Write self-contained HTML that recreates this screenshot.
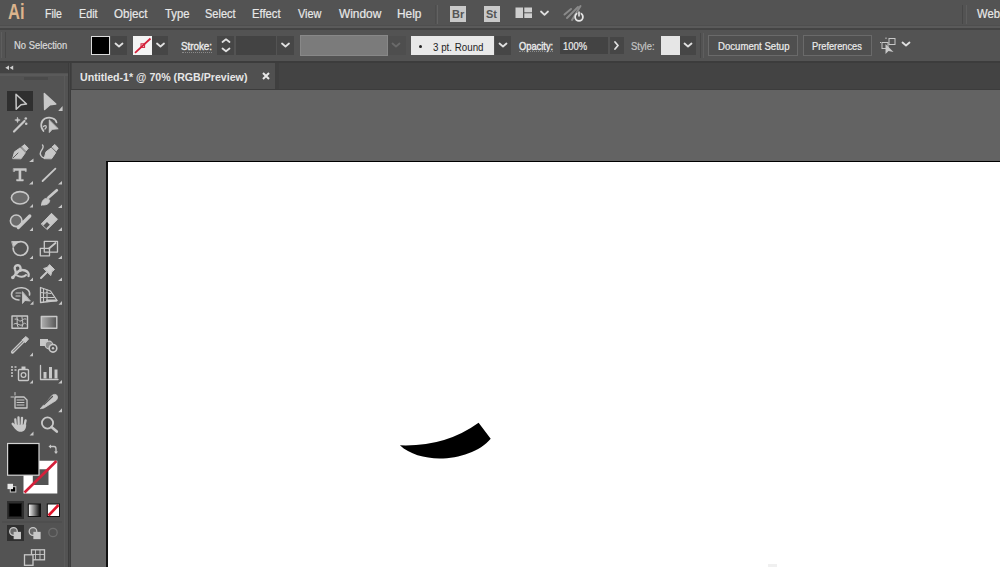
<!DOCTYPE html>
<html><head><meta charset="utf-8">
<style>
*{margin:0;padding:0;box-sizing:border-box}
html,body{width:1000px;height:567px;overflow:hidden;background:#535353;font-family:"Liberation Sans",sans-serif;color:#e6e6e6}
.a{position:absolute}
.t{position:absolute;white-space:nowrap;transform-origin:0 0;line-height:1}
.m{font-size:12.5px;top:8px;color:#e8e8e8;-webkit-text-stroke:0.2px #e8e8e8}
.c{font-size:10px;color:#ececec;-webkit-text-stroke:0.2px #ececec}
.box{position:absolute;background:#464646}
</style></head><body>
<!-- menu bar -->
<div class="a" style="left:0;top:24.5px;width:1000px;height:1.5px;background:#4e4e4e"></div>
<div class="a" style="left:0;top:26px;width:1000px;height:2px;background:#5a5a5a"></div>
<div class="a" style="left:0;top:28px;width:1000px;height:2px;background:#444444"></div>
<div class="t" style="left:7.5px;top:1.5px;font-size:21.5px;font-weight:bold;color:#dcb48c;transform:scaleX(0.77)">Ai</div>
<div class="t m" style="left:45px;transform:scaleX(0.84)">File</div>
<div class="t m" style="left:79px;transform:scaleX(0.86)">Edit</div>
<div class="t m" style="left:113.5px;transform:scaleX(0.93)">Object</div>
<div class="t m" style="left:164.5px;transform:scaleX(0.9)">Type</div>
<div class="t m" style="left:204.5px;transform:scaleX(0.88)">Select</div>
<div class="t m" style="left:252px;transform:scaleX(0.9)">Effect</div>
<div class="t m" style="left:297.5px;transform:scaleX(0.87)">View</div>
<div class="t m" style="left:338.5px;transform:scaleX(0.95)">Window</div>
<div class="t m" style="left:397px;transform:scaleX(0.95)">Help</div>
<div class="a" style="left:435px;top:5px;width:1px;height:19px;background:#4d4d4d"></div>
<div class="a" style="left:436.5px;top:5px;width:1.5px;height:19px;background:#626262"></div>
<div class="a" style="left:962px;top:5px;width:1px;height:19px;background:#474747"></div>
<div class="a" style="left:966px;top:5px;width:1px;height:19px;background:#5e5e5e"></div>
<div class="t m" style="left:977px;transform:scaleX(0.9)">Web</div>
<!-- Br / St -->
<div class="a" style="left:450px;top:6px;width:16px;height:16px;background:#c9c9c9"></div>
<div class="t" style="left:452px;top:9px;font-size:11px;color:#555;font-weight:bold">Br</div>
<div class="a" style="left:484px;top:6px;width:16px;height:16px;background:#c9c9c9"></div>
<div class="t" style="left:486px;top:9px;font-size:11px;color:#555;font-weight:bold">St</div>

<!-- control bar -->
<div class="a" style="left:0;top:61px;width:1000px;height:2px;background:#3c3c3c"></div>
<div class="a" style="left:1px;top:32px;width:1px;height:26px;background:#5e5e5e"></div>
<div class="a" style="left:5px;top:32px;width:1px;height:26px;background:#474747"></div>
<div class="t c" style="left:14px;top:41px;transform:scaleX(0.94);color:#dadada;-webkit-text-stroke:0.2px #dadada">No Selection</div>
<div class="a" style="left:91px;top:36px;width:19px;height:19px;background:#000;border:1.5px solid #dcdcdc"></div>
<div class="box" style="left:111px;top:36px;width:16px;height:19px"></div>
<div class="a" style="left:133px;top:36px;width:19px;height:19px;background:#f4f4f4"></div>
<div class="box" style="left:152px;top:36px;width:16px;height:19px"></div>
<div class="t c" style="left:181px;top:42px;transform:scaleX(0.98);-webkit-text-stroke:0.35px #ececec">Stroke:</div>
<div class="a" style="left:182px;top:51.5px;width:30px;height:1px;border-top:1px dotted #8a8a8a"></div>
<div class="box" style="left:217px;top:36px;width:17px;height:19px"></div>
<div class="a" style="left:236px;top:36px;width:40px;height:19px;background:#434343"></div>
<div class="box" style="left:277px;top:36px;width:17px;height:19px"></div>
<div class="a" style="left:300px;top:35px;width:88px;height:21px;background:#7b7b7b;border:1px solid #888"></div>
<div class="a" style="left:388px;top:36px;width:18px;height:19px;background:#4e4e4e"></div>
<div class="a" style="left:411px;top:36px;width:83px;height:19px;background:#e9e9e9"></div>
<div class="a" style="left:419px;top:44.5px;width:3px;height:3px;background:#222;border-radius:50%"></div>
<div class="t" style="left:433px;top:42px;font-size:10.5px;color:#1e1e1e;transform:scaleX(0.93)">3 pt. Round</div>
<div class="box" style="left:495px;top:36px;width:16px;height:19px"></div>
<div class="t c" style="left:518.5px;top:42px;transform:scaleX(0.93);-webkit-text-stroke:0.35px #ececec">Opacity:</div>
<div class="a" style="left:519px;top:50.5px;width:34px;height:1px;border-top:1px dotted #8a8a8a"></div>
<div class="a" style="left:560px;top:37px;width:48px;height:17px;background:#434343"></div>
<div class="t c" style="left:562.5px;top:42px;transform:scaleX(0.94)">100%</div>
<div class="box" style="left:610px;top:37px;width:14px;height:17px"></div>
<div class="t c" style="left:631px;top:42px;transform:scaleX(0.94);color:#c4c4c4;-webkit-text-stroke:0.2px #c4c4c4">Style:</div>
<div class="a" style="left:661px;top:36px;width:19px;height:19px;background:#e6e6e6"></div>
<div class="box" style="left:680px;top:36px;width:16px;height:19px"></div>
<div class="a" style="left:700px;top:33px;width:1px;height:25px;background:#474747"></div>
<div class="a" style="left:703px;top:33px;width:1px;height:25px;background:#5e5e5e"></div>
<div class="a" style="left:708px;top:35px;width:90px;height:21px;border:1px solid #6a6a6a;background:#4f4f4f"></div>
<div class="t c" style="left:717.5px;top:42px;transform:scaleX(0.96)">Document Setup</div>
<div class="a" style="left:803px;top:35px;width:69px;height:21px;border:1px solid #6a6a6a;background:#4f4f4f"></div>
<div class="t c" style="left:812px;top:42px;transform:scaleX(0.925)">Preferences</div>

<!-- tab bar -->
<div class="a" style="left:71px;top:63px;width:929px;height:26px;background:#434343"></div>
<div class="a" style="left:72px;top:63px;width:203px;height:26px;background:#505050"></div>
<div class="a" style="left:275px;top:63px;width:4px;height:26px;background:#3f3f3f"></div>
<div class="t" style="left:80px;top:72px;font-size:10.5px;font-weight:bold;color:#e6e6e6;transform:scaleX(1.012)">Untitled-1* @ 70% (RGB/Preview)</div>

<svg class="a" style="left:262px;top:72px" width="8" height="8"><path d="M1 1L7 7M7 1L1 7" stroke="#e8e8e8" stroke-width="2"/></svg>

<!-- toolbar -->
<div class="a" style="left:0;top:63px;width:68px;height:10px;background:#434343"></div>
<div class="a" style="left:0;top:74px;width:68px;height:2px;background:#5a5a5a"></div>
<div class="a" style="left:24px;top:77px;width:24px;height:3px;background:#4a4a4a"></div>
<div class="a" style="left:64px;top:76px;width:1px;height:491px;background:#5a5a5a"></div>
<div class="a" style="left:68px;top:63px;width:3px;height:504px;background:#3c3c3c"></div>
<div class="a" style="left:69px;top:63px;width:1px;height:504px;background:#464646"></div>
<div class="a" style="left:7px;top:91px;width:26px;height:20px;background:#2f2f2f"></div>
<div class="a" style="left:7px;top:501px;width:17px;height:18px;background:#2f2f2f"></div>
<div class="a" style="left:7px;top:525px;width:17px;height:16px;background:#2f2f2f"></div>

<!-- pasteboard -->
<div class="a" style="left:71px;top:89px;width:929px;height:1px;background:#3c3c3c"></div>
<div class="a" style="left:71px;top:90px;width:929px;height:477px;background:#636363"></div>
<div class="a" style="left:106px;top:161px;width:894px;height:406px;background:#fff;border-top:1px solid #000;border-left:2px solid #111"></div>

<svg class="a" style="left:0;top:0" width="1000" height="567" viewBox="0 0 1000 567" fill="none" stroke="none">

 <g fill="#c6c6c6">
  <path d="M58.2 111L62.6 111L62.6 106ZM29 162L33.5 162L33.5 158.5ZM29 184.5L33 184.5L33 181ZM58 184.5L62 184.5L62 181ZM29.5 207.5L33 207.5L33 204ZM58 208L62 208L62 204.5ZM29.5 231L33 231L33 227.3ZM58 231L62 231L62 227.3ZM29.5 259L33 259L33 255.5ZM58 259L62 259L62 255.5ZM29.5 281L33 281L33 277.5ZM58 281L62 281L62 277.5ZM30 304.7L33.5 304.7L33.5 301ZM58.5 304.7L62 304.7L62 301ZM29.6 356.2L33 356.2L33 352.4ZM29.6 383.4L33 383.4L33 380ZM58.2 383.4L62 383.4L62 380ZM58.2 412.2L62 412.2L62 408.3ZM29.6 435.4L33.5 435.4L33.5 431.6Z"/>
 </g>
 <g id="tools" stroke="#c8c8c8" fill="none" stroke-width="1.4" stroke-linejoin="round" stroke-linecap="round">
  <!-- selection -->
  <path d="M16 94.3L26.5 104L21 104.8L16.2 109.2Z" fill="#2f2f2f" stroke-width="1.5"/>
  <!-- direct selection -->
  <path d="M44.3 93.5L55.8 104L50 104.8L44.6 109.5Z" fill="#c8c8c8"/>
  <!-- magic wand -->
  <path d="M14 131.5L24.5 121" stroke-width="2.2"/>
  <path d="M17.5 117.5L18.3 119.4L20.2 120L18.3 120.7L17.5 122.6L16.8 120.7L14.8 120L16.8 119.4Z" fill="#c8c8c8" stroke-width="0.6"/>
  <circle cx="25.8" cy="118.5" r="1.3" fill="#c8c8c8" stroke="none"/>
  <circle cx="26.2" cy="123.8" r="1.3" fill="#c8c8c8" stroke="none"/>
  <!-- lasso -->
  <path d="M43.5 131C40 127 40.5 121 45 118.5C50 116.5 56 118.5 56.5 122.5" stroke-width="1.7"/>
  <path d="M43.5 126.5C46 124 47.5 127 45 129" stroke-width="1.3"/>
  <path d="M49.3 120.3L49.3 132.5L52.2 129.3L57.8 128.8Z" fill="#c8c8c8" stroke-width="1"/>
  <!-- pen -->
  <path d="M12.7 158.3L14.5 151.8L20.3 147.8L25.3 152.8L21.2 158.5Z" fill="#c8c8c8" stroke-width="1"/>
  <path d="M21.8 146.8L24.6 144.5L28.3 148.2L26 151Z" fill="#c8c8c8" stroke-width="1"/>
  <path d="M13 158L18 153" stroke="#535353" stroke-width="0.9"/>
  <!-- curvature pen -->
  <path d="M42.5 145C44.5 147 42 149.5 40.8 151.5C39.5 154 41 157.5 44.5 158" stroke-width="1.4"/>
  <path d="M44.2 158.3L46 151.8L51.2 148L55.7 152.8L51.7 158.5Z" fill="#c8c8c8" stroke-width="1"/>
  <path d="M52.2 146.8L54.9 144.5L58.2 148.2L56.2 151Z" fill="#c8c8c8" stroke-width="1"/>
  <!-- type -->
  <path d="M13.6 168.6H26.3V171.5H25.2V170.4H21V179.4H23.3V181H16.6V179.4H18.9V170.4H14.7V171.5H13.6Z" fill="#c8c8c8" stroke-width="0.5"/>
  <!-- line -->
  <path d="M42.6 181L55.4 168.6" stroke-width="1.8"/>
  <!-- ellipse -->
  <ellipse cx="20" cy="197.8" rx="8.6" ry="6.2" fill="#6b6b6b" stroke-width="1.6"/>
  <!-- paintbrush -->
  <path d="M48.5 197.5L56.8 190.3" stroke-width="2.8"/>
  <path d="M41.5 205C41.5 201 44 198 47.5 198.2L49.8 200.3C49.5 204 46 205.5 41.5 205Z" fill="#c8c8c8" stroke-width="0.8"/>
  <!-- shaper -->
  <circle cx="16.2" cy="220.8" r="5.8" fill="#6b6b6b" stroke-width="1.6"/>
  <path d="M18.3 227.5L29.8 216" stroke-width="3.2"/>
  <!-- eraser -->
  <path d="M41.5 223.8L51.5 213.3L57.5 219.3L47.5 229.3Z" fill="#c8c8c8" stroke-width="1"/>
  <path d="M43.5 225.5L47 222L49.8 224.8L46.3 228.2Z" fill="#535353" stroke="none"/>
  <!-- rotate -->
  <path d="M15.5 243.5C19 240.5 25.5 241 27.5 246C29 251 25 255.5 20.5 255.5C16 255.5 13 252 13.2 248" stroke-width="1.7"/>
  <path d="M12 241.5L18.5 241.5L13.5 247Z" fill="#c8c8c8" stroke-width="0.8"/>
  <!-- scale -->
  <rect x="44.3" y="241.3" width="13.2" height="10.8" stroke-width="1.3"/>
  <rect x="40.3" y="248.3" width="9.2" height="7.5" stroke-width="1.3"/>
  <path d="M49 248.5L55.5 243" stroke-width="1.8"/>
  <!-- warp -->
  <path d="M13 277C15.5 275.5 16.5 272.5 15 269.5C14 267 15.5 265 18 265.3C20.5 265.6 21 268 20.3 270.3" stroke-width="2.4"/>
  <path d="M16.5 273.5C18.5 270.5 22 269.5 25 270.5C27.5 271.3 29.5 273.5 28.5 276" stroke-width="2.4"/>
  <path d="M17 275.5C20 277.5 24 277 26 275" stroke-width="2"/>
  <circle cx="12.8" cy="277.5" r="1.8" fill="#c8c8c8" stroke="none"/>
  <!-- puppet pin -->
  <path d="M44 268.5Q47.8 268.2 49.6 264.6L54.5 269.5Q50.9 271.4 50.8 275.2Z" fill="#cccccc" stroke-width="1"/>
  <path d="M41 278L46.5 272.5" stroke-width="2"/>
  <!-- free transform -->
  <path d="M19 300C14 300 11.5 297 11.5 294.5C11.5 290 17 287.5 22 287.8C27 288 30.5 291 29.5 295" stroke-width="1.6"/>
  <path d="M16 293H21M16 296H20" stroke-width="1.2"/>
  <path d="M22.5 292L22.5 303.5L25 300.5L30 301Z" fill="#c8c8c8" stroke-width="0.8"/>
  <!-- perspective grid -->
  <path d="M40.5 287.5L50.5 291L57 300.5L40.5 302.5Z" stroke-width="1.3"/>
  <path d="M43.5 288.5V302M47 289.8V301.8M40.5 292.5L51 293.5M40.5 297.5L54 297.5" stroke-width="1.1"/>
  <path d="M47 300.5H56.5" stroke-width="1.8"/>
  <!-- mesh -->
  <rect x="12" y="316" width="15.5" height="12.2" stroke-width="1.4"/>
  <path d="M15 319C18 318 19 322 21 321C23 320 24 318 26 319M14 324C17 322 19 326 22 325C24 324 24 322 26 324M17 317C18 320 16 324 18 327M22 317C22 320 24 324 22 327" stroke-width="1"/>
  <!-- gradient -->
  <defs><linearGradient id="gt" x1="0" x2="1"><stop offset="0" stop-color="#b0b0b0"/><stop offset="1" stop-color="#555555"/></linearGradient>
  <linearGradient id="gm" x1="0" x2="1"><stop offset="0" stop-color="#ffffff"/><stop offset="1" stop-color="#000000"/></linearGradient></defs>
  <rect x="41.3" y="316.5" width="15.5" height="11.8" fill="url(#gt)" stroke-width="1.4"/>
  <!-- eyedropper -->
  <path d="M12.5 352L24 340.5" stroke-width="3.2"/>
  <path d="M13.2 351.3L23.5 341" stroke="#535353" stroke-width="1"/>
  <path d="M22.5 339.5L26 336.5L28.5 339L25.5 342.5Z" fill="#c8c8c8" stroke-width="1"/>
  <!-- blend -->
  <rect x="40" y="339" width="8" height="7" fill="#c8c8c8" stroke="none"/>
  <circle cx="49" cy="345" r="3.8" fill="#8a8a8a" stroke-width="1.2"/>
  <circle cx="53" cy="348.3" r="3.8" fill="#535353" stroke-width="1.6"/>
  <circle cx="53" cy="348.3" r="1.2" fill="#c8c8c8" stroke="none"/>
  <!-- symbol sprayer -->
  <path d="M11 367H13M14.5 367H16.5M11 370H13M14.5 370H16.5M11 373H13M11 376H13" stroke-width="1.3" stroke-linecap="butt"/>
  <rect x="18.5" y="369.5" width="10" height="11" rx="1" stroke-width="1.4"/>
  <rect x="21.5" y="366.5" width="4" height="2.5" fill="#c8c8c8" stroke="none"/>
  <circle cx="23.5" cy="375" r="2.4" stroke-width="1.2"/>
  <!-- column graph -->
  <path d="M40.5 365.5V379.5H58" stroke-width="1.3"/>
  <rect x="43.5" y="372" width="3" height="6.5" fill="#c8c8c8" stroke="none"/>
  <rect x="49" y="367" width="3" height="11.5" fill="#c8c8c8" stroke="none"/>
  <rect x="54.5" y="369.5" width="3" height="9" fill="#c8c8c8" stroke="none"/>
  <!-- artboard -->
  <path d="M15 397H24L27 400V408H15Z" stroke-width="1.3"/>
  <path d="M15 392.5V395M11 397H13.5M17 400H24M17 402.5H24M17 405H24" stroke-width="1"/>
  <!-- slice -->
  <path d="M40.5 408.5L52 395.5C53.5 394 56 394 57 395.5C58 397 57.5 399 56 400.5L44 408Z" fill="#c8c8c8" stroke-width="0.8"/>
  <path d="M44 404.5L52.5 396.5" stroke="#535353" stroke-width="1.2"/>
  <!-- hand -->
  <path d="M14.8 424.5C14.5 429.5 17 431.8 20.5 431.8C24.3 431.8 26.3 429 26.2 424.5Z" fill="#c8c8c8" stroke="none"/>
  <path d="M15.8 425L15.3 419.5M18.7 424L18.5 417.3M21.7 424L22 417.8M24.6 425L25.6 420.3M15.8 428L12.6 423.8" stroke-width="2.3"/>
  <!-- zoom -->
  <circle cx="47.5" cy="423" r="5.6" stroke-width="1.8"/>
  <path d="M51.5 427L56.8 431.6" stroke-width="2.6"/>
 </g>


 <!-- fill / stroke big swatches -->
 <g>
  <path d="M23.5 460.8H57.3V493.4H23.5Z M32.8 469.3V485H48.5V469.3Z" fill="#ffffff" fill-rule="evenodd"/>
  <rect x="7.6" y="443.5" width="31.4" height="31.7" fill="#000" stroke="#d2d2d2" stroke-width="1.2"/>
  <path d="M24.5 492.5L56.5 461" stroke="#d4203a" stroke-width="2.6"/>
  <!-- swap arrow -->
  <path d="M50 446.5H54C55.5 446.5 56 447.5 56 449V452" stroke="#c8c8c8" stroke-width="1.3" fill="none"/>
  <path d="M48.5 446.5L51 444.5V448.5Z M54 451.5H58L56 454Z" fill="#c8c8c8"/>
  <!-- default fill/stroke -->
  <rect x="10.3" y="486.7" width="5.5" height="5.3" fill="#000" stroke="#c8c8c8" stroke-width="1"/>
  <rect x="7.5" y="483.8" width="5.5" height="5.3" fill="#e8e8e8"/>
  <!-- color modes -->
  <rect x="9" y="503.5" width="12.5" height="13" fill="#000" stroke="#1a1a1a" stroke-width="0.8"/>
  <rect x="28.3" y="504" width="12.2" height="12.5" fill="url(#gm)" stroke="#111" stroke-width="1"/>
  <rect x="47.3" y="504" width="12.2" height="12.5" fill="#fff" stroke="#111" stroke-width="1"/>
  <path d="M48.5 515.5L58.5 505" stroke="#e0142a" stroke-width="2.6"/>
  <rect x="2" y="521.5" width="60" height="1" fill="#4a4a4a"/>
  <!-- draw modes -->
  <g stroke="#c8c8c8" fill="none" stroke-width="1.3">
   <circle cx="13.5" cy="531.5" r="3.8" fill="#6a6a6a"/>
   <rect x="14.3" y="532.5" width="6" height="6" fill="#c8c8c8"/>
   <circle cx="33" cy="531.5" r="3.8" fill="#6a6a6a"/>
   <rect x="34" y="532.5" width="6" height="6" fill="#c8c8c8"/>
   <circle cx="53" cy="532.5" r="4.2" stroke="#6e6e6e"/>
  </g>
  <!-- screen mode -->
  <g stroke="#c8c8c8" fill="#535353" stroke-width="1.3">
   <rect x="31.5" y="549.8" width="13" height="10"/>
   <path d="M35.5 549.8V559.8M40 549.8V559.8M31.5 554.5H44.5" stroke-width="0.9"/>
   <rect x="24.5" y="554.8" width="8.5" height="10.5"/>
  </g>
  <!-- collapse arrows -->
  <path d="M9 65.5L5.3 67.8L9 70Z M13.2 65.5L9.6 67.8L13.2 70Z" fill="#d0d0d0"/>
 </g>
 <!-- control bar icons -->
 <g stroke="#e0e0e0" fill="none" stroke-width="1.8" stroke-linecap="round" stroke-linejoin="round">
  <path d="M115.5 43.5L119 46.5L122.5 43.5"/>
  <path d="M157 43.5L160.5 46.5L164 43.5"/>
  <path d="M222.5 42L226 39.3L229.5 42"/>
  <path d="M222.5 48.5L226 51.3L229.5 48.5"/>
  <path d="M282 43.5L285.5 46.5L289 43.5"/>
  <path d="M392.5 43.5L396 46.5L399.5 43.5" stroke="#6a6a6a"/>
  <path d="M499.5 43.5L503 46.5L506.5 43.5"/>
  <path d="M615 42L618 45.5L615 49"/>
  <path d="M684.5 43.5L688 46.5L691.5 43.5"/>
  <path d="M902.5 42.5L906 45.5L909.5 42.5"/>
  <path d="M541 11.5L544.5 14.8L548 11.5" stroke-width="1.8"/>
 </g>
 <!-- stroke swatch none -->
 <path d="M135 52.8L150.5 38.5" stroke="#d4203a" stroke-width="1.8"/>
 <rect x="141" y="43.8" width="3.6" height="3.6" fill="none" stroke="#d4203a" stroke-width="1"/>
 <!-- transform icon -->
 <g stroke="#c8c8c8" fill="none" stroke-width="1">
  <rect x="882" y="42.5" width="6" height="6"/>
  <rect x="889" y="38.5" width="6" height="6"/>
  <path d="M881 42.5H880M886 37.5V39"/>
 </g>
 <path d="M885.5 44L885.5 54L888.5 51L893.5 52Z" fill="#c8c8c8"/>
 <!-- workspace icon -->
 <rect x="515.5" y="7.5" width="7.5" height="10.5" fill="#cfcfcf"/>
 <rect x="524.3" y="7.5" width="7.7" height="4.8" fill="#cfcfcf"/>
 <rect x="524.3" y="13.3" width="7.7" height="4.7" fill="#cfcfcf"/>
 <!-- sync icon -->
 <g stroke="#8a8a8a" stroke-width="2" stroke-linecap="round">
  <path d="M564.5 14.5L571 9"/>
  <path d="M567 18L578 7"/>
  <path d="M572 20L580.5 6"/>
 </g>
 <circle cx="579" cy="17" r="4.6" fill="#535353" stroke="none"/>
 <circle cx="579" cy="17" r="3.9" fill="none" stroke="#e6e6e6" stroke-width="1.8"/>
 <path d="M579 11.5V16.5" stroke="#535353" stroke-width="3.2"/>
 <path d="M579 11.5V16.5" stroke="#e6e6e6" stroke-width="1.6"/>
 <!-- artwork -->
 <path d="M399.9 445.3 Q445 447 478.6 422.7 L490.7 438.7 C472 461 422 466 399.9 445.3 Z" fill="#000"/>
</svg>
<div class="a" style="left:768px;top:564px;width:9px;height:3px;background:#f0f0f0"></div>
</body></html>
